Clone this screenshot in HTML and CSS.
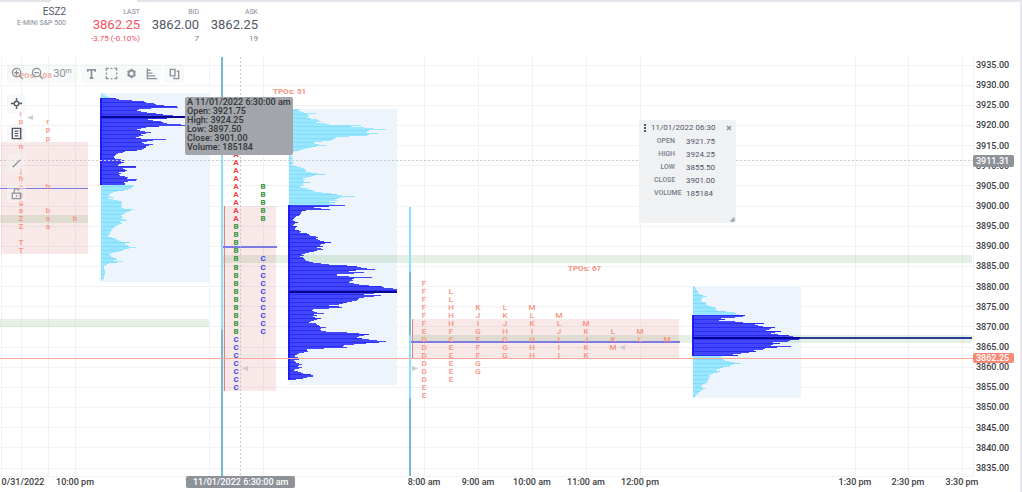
FILE: index.html
```html
<!DOCTYPE html>
<html lang="en">

<head>
  <meta charset="utf-8">
  <title>ESZ2 - Market Profile</title>
  <link rel="stylesheet" href="styles.css">
</head>

<body>
  <div class="tabs"><span class="tab-active"></span></div>
  <header class="quote">
    <div class="quote-col symbol">
      <h1>ESZ2</h1>
      <div class="label">E-MINI S&amp;P 500</div>
    </div>
    <div class="quote-col last">
      <div class="label">LAST</div>
      <div class="price">3862.25</div>
      <div class="sub">-3.75 (-0.10%)</div>
    </div>
    <div class="quote-col">
      <div class="label">BID</div>
      <div class="price">3862.00</div>
      <div class="sub">7</div>
    </div>
    <div class="quote-col">
      <div class="label">ASK</div>
      <div class="price">3862.25</div>
      <div class="sub">19</div>
    </div>
  </header>

  <main class="chart">
    <svg id="plot" class="plot" role="img" aria-label="TPO and volume profile chart"></svg>
    <div id="priceAxis" class="price-axis"></div>

    <div class="toolbar">
      <div class="group">
        <button type="button" aria-label="Zoom in">
          <svg viewBox="0 0 14 14"><circle cx="6" cy="6" r="4.500"/><path d="M9.500 9.500L13 13M3.500 6h5M6 3.500v5"/></svg>
        </button>
        <button type="button" aria-label="Zoom out">
          <svg viewBox="0 0 14 14"><circle cx="6" cy="6" r="4.500"/><path d="M9.500 9.500L13 13M3.500 6h5"/></svg>
        </button>
        <button type="button" class="interval">30<sup>m</sup></button>
      </div>
      <div class="group">
        <button type="button" aria-label="Text">
          <svg viewBox="0 0 14 14"><path d="M3 5V3h8v2M7 3v9M5 12h4" stroke-width="1.800"/></svg>
        </button>
        <button type="button" aria-label="Select area">
          <svg viewBox="0 0 14 14"><path d="M1.500 4V1.500H4M6 1.500h2M10 1.500h2.500V4M12.500 6v2M12.500 10v2.500H10M8 12.500H6M4 12.500H1.500V10M1.500 8V6" stroke-width="1.500"/></svg>
        </button>
        <button type="button" aria-label="Settings">
          <svg viewBox="0 0 14 14"><circle cx="7" cy="7" r="3.200" stroke-width="2"/><path d="M7 2v1.500M7 10.500V12M2.700 4.500L4 5.300M10 8.700l1.300.8M2.700 9.500L4 8.700M10 5.300l1.300-.8" stroke-width="2"/></svg>
        </button>
        <button type="button" aria-label="Profile">
          <svg viewBox="0 0 14 14"><path d="M2.500 1.500v11H13M3 3.500h3M3 6.500h5M3 9.500h8" stroke-width="1.400"/></svg>
        </button>
      </div>
      <div class="group">
        <button type="button" aria-label="Copy">
          <svg viewBox="0 0 14 14"><path d="M2.500 2.500h5v7h-5zM9.500 4.500h2v8h-5v-1.500" stroke-width="1.500"/></svg>
        </button>
      </div>
    </div>

    <div class="sidebar">
      <button type="button" class="dark" aria-label="Crosshair">
        <svg viewBox="0 0 14 14"><circle cx="7" cy="7" r="2.500" stroke-width="1.500"/><path d="M7 1v3M7 10v3M1 7h3M10 7h3" stroke-width="1.500"/></svg>
      </button>
      <button type="button" class="dark" aria-label="Data window">
        <svg viewBox="0 0 14 14"><path d="M2.500 1.500h9v11h-9z" stroke-width="1.500"/><path d="M5 4.500h4M5 7h4M5 9.500h4"/></svg>
      </button>
      <button type="button" aria-label="Draw line">
        <svg viewBox="0 0 14 14"><path d="M3 11l8-8"/></svg>
      </button>
      <button type="button" aria-label="Unlock">
        <svg viewBox="0 0 14 14"><path d="M2.500 6.500h9v6h-9zM4.500 6.500V4a2.300 2.300 0 0 1 4.600 0M7 9v1.500"/></svg>
      </button>
    </div>

    <div class="tooltip">
      <div>A 11/01/2022 6:30:00 am</div>
      <div>Open: 3921.75</div>
      <div>High: 3924.25</div>
      <div>Low: 3897.50</div>
      <div>Close: 3901.00</div>
      <div>Volume: 185184</div>
    </div>

    <section class="data-box">
      <div class="data-head">
        <svg class="grip" viewBox="0 0 4 9"><path d="M1 0h2v2H1zM1 3h2v2H1zM1 6h2v2H1z"/></svg>
        <span>11/01/2022 06:30</span>
        <button type="button" aria-label="Close">
          <svg viewBox="0 0 6 6"><path d="M1 1l4 4M5 1L1 5"/></svg>
        </button>
      </div>
      <table>
        <tr><th scope="row">OPEN</th><td>3921.75</td></tr>
        <tr><th scope="row">HIGH</th><td>3924.25</td></tr>
        <tr><th scope="row">LOW</th><td>3855.50</td></tr>
        <tr><th scope="row">CLOSE</th><td>3901.00</td></tr>
        <tr><th scope="row">VOLUME</th><td>185184</td></tr>
      </table>
      <svg class="resize" viewBox="0 0 6 6"><path d="M5 1v4H1M3 3h2v2H3z"/></svg>
    </section>

    <div class="badge cursor-price">3911.31</div>
    <div class="badge last-price">3862.25</div>
    <div class="badge cursor-time">11/01/2022 6:30:00 am</div>
  </main>
  <script src="chart.js"></script>
</body>

</html>
```

FILE: styles.css
```css
* {
  box-sizing: border-box;
}

body {
  font-family: Roboto, sans-serif;
  margin: 0;
  min-height: 100vh;
  background-color: #fff;
  color: #4f5666;
  border-right: 2px solid #e6e7ec;
  overflow: hidden;
}

button {
  display: flex;
  align-items: center;
  justify-content: center;
  padding: 0;
  border: 0;
  background: none;
  font-family: inherit;
  color: #8b919b;
}

button svg {
  width: 13px;
  height: 13px;
  fill: none;
  stroke: currentColor;
  stroke-width: 1.3;
}

/* header */
.tabs {
  height: 2px;
  padding-left: 51px;
  background-color: #e1e4e8;
}

.tab-active {
  display: block;
  width: 86px;
  height: 2px;
  background-color: #fff;
}

.quote {
  display: flex;
  height: 55px;
  padding-top: 4px;
}

.quote-col {
  width: 59px;
  text-align: right;
}

.quote-col.symbol {
  width: 66px;
}

.quote-col.last {
  width: 74px;
}

h1 {
  margin: 0;
  font-size: 10px;
  line-height: 11px;
  font-weight: 400;
}

.label {
  font-size: 7px;
  line-height: 12px;
  color: #858a95;
}

.quote-col .price {
  font-size: 13px;
  line-height: 14px;
}

.sub {
  font-size: 8px;
  line-height: 13px;
  color: #767c88;
}

.last .price,
.last .sub {
  color: #f4505e;
}

/* chart */
.chart {
  position: relative;
  display: flex;
}

.plot {
  flex: 1;
  min-width: 0;
  height: 435px;
  overflow: visible;
}

.price-axis {
  display: flex;
  flex-direction: column;
  justify-content: space-between;
  width: 47px;
  height: 419px;
  padding: 2px 0 2px 3px;
  font-size: 9px;
  line-height: 12px;
  font-weight: 500;
  color: #3c3e43;
}

.grid {
  stroke: #f2f2f3;
}

.cross {
  stroke: #c8c9cc;
  stroke-dasharray: 2 2;
}

.last-line {
  stroke: #fbaa9b;
}

.time {
  font-size: 9px;
  font-weight: 500;
  fill: #3c3e43;
  text-anchor: middle;
}

.tpo {
  font-size: 8px;
  font-weight: 500;
  text-anchor: middle;
}

.tpo.red,
.tpo.green,
.tpo.blue {
  font-weight: 700;
}

.count {
  font-size: 8px;
  font-weight: 700;
}

.salmon { fill: #f5917f; }
.red { fill: #f93f46; }
.green { fill: #34933a; }
.blue { fill: #4646f6; }

.profile-bg { fill: #edf4fb; }
.value-box { fill: rgba(214, 120, 120, 0.17); }
.band { fill: rgba(120, 185, 120, 0.2); }
.mid { fill: #7b7be3; }
.open-bar { fill: #d88585; }
.session { fill: #77b7cf; }
.session-hot { fill: #8de0fc; }
.outer { fill: #98e6ff; }
.outer-line { fill: #84dcf7; }
.inner { fill: #4347fc; }
.inner-line { fill: #2b2df2; }
.edge { fill: #1c1cf5; }
.poc { fill: #070794; }
.poc-ray { fill: #293c96; }
.mark { fill: #cbcccd; }

/* tools */
.toolbar {
  position: absolute;
  top: 7px;
  left: 7px;
  display: flex;
  gap: 3px;
}

.group {
  display: flex;
  border-radius: 3px;
  background-color: rgba(233, 238, 239, 0.3);
}

.group button {
  width: 20px;
  height: 19px;
}

.group .interval {
  width: 31px;
  align-items: flex-start;
  font-size: 11px;
  line-height: 19px;
}

.interval sup {
  font-size: 7px;
  line-height: 14px;
}

.sidebar {
  position: absolute;
  top: 37px;
  left: 7px;
  display: flex;
  flex-direction: column;
  gap: 11px;
}

.sidebar button {
  width: 19px;
  height: 19px;
  border-radius: 3px;
  background-color: rgba(245, 247, 247, 0.4);
}

.sidebar .dark {
  background-color: rgba(245, 247, 247, 0.7);
  color: #4d5564;
}

/* overlays */
.tooltip {
  position: absolute;
  top: 40px;
  left: 185px;
  padding: 1px 2px 3px;
  border-radius: 2px;
  background-color: #a2a5aa;
  color: #333538;
  font-size: 9px;
  line-height: 9px;
  font-weight: 500;
  white-space: nowrap;
}

.data-box {
  position: absolute;
  top: 63px;
  left: 639px;
  width: 97px;
  height: 103px;
  padding: 2px 4px;
  border-radius: 2px;
  background-color: #eff1f3;
}

.data-head {
  display: flex;
  align-items: center;
  gap: 4px;
  font-size: 8px;
  line-height: 12px;
  white-space: nowrap;
}

.grip {
  width: 4px;
  height: 9px;
  fill: #4f5666;
}

.data-head button {
  margin-left: auto;
}

.data-head button svg {
  width: 6px;
  height: 6px;
}

.data-box table {
  width: 78px;
  margin: 1px 0 0 11px;
  table-layout: fixed;
  border-collapse: collapse;
}

.data-box th,
.data-box td {
  height: 13px;
  padding: 0;
  font-size: 8px;
  line-height: 13px;
}

.data-box th {
  width: 21px;
  font-size: 7px;
  font-weight: 500;
  text-align: right;
  white-space: nowrap;
  color: #767c88;
}

.data-box td {
  padding-left: 11px;
}

.data-box .resize {
  position: absolute;
  right: 1px;
  bottom: 1px;
  width: 6px;
  height: 6px;
  fill: none;
  stroke: #9a9ea5;
}

.badge {
  position: absolute;
  padding: 0 3px;
  border-radius: 2px;
  background-color: #8e9299;
  color: #fff;
  font-size: 9px;
  line-height: 12px;
  font-weight: 500;
  white-space: nowrap;
}

.cursor-price,
.last-price {
  right: 6px;
  width: 41px;
}

.cursor-price {
  top: 98px;
}

.last-price {
  top: 296px;
  line-height: 10px;
  background-color: #f98b76;
}

.cursor-time {
  top: 419px;
  left: 186px;
  padding: 0 7px;
}
```

FILE: chart.js
```js
const plot = document.getElementById('plot');
const priceAxis = document.getElementById('priceAxis');

const TOP_PRICE = 3935;
const BOTTOM_PRICE = 3835;
const PLOT_HEIGHT = 419;

function priceY(price) {
  return 8 + (TOP_PRICE - price) * 403 / (TOP_PRICE - BOTTOM_PRICE);
}

function add(tag, attrs, text) {
  const el = document.createElementNS('http://www.w3.org/2000/svg', tag);
  for (const name in attrs) {
    el.setAttribute(name, attrs[name]);
  }
  if (text) el.textContent = text;
  plot.appendChild(el);
}

function rect(cls, x, y, width, height) {
  add('rect', { class: cls, x, y, width, height, 'shape-rendering': 'crispEdges' });
}

function line(cls, x1, y1, x2, y2) {
  add('line', { class: cls, x1, y1, x2, y2, 'shape-rendering': 'crispEdges' });
}

// grid and price labels
for (let p = TOP_PRICE; p >= BOTTOM_PRICE; p -= 5) {
  line('grid', 0, priceY(p), '100%', priceY(p));
  const label = document.createElement('div');
  label.textContent = p.toFixed(2);
  priceAxis.appendChild(label);
}
[1, 21, 48, 75, 209, 263, 424, 478, 532, 586, 640, 855, 908, 962].forEach(x => line('grid', x, 0, x, PLOT_HEIGHT));
line('grid', '100%', 0, '100%', PLOT_HEIGHT);
line('grid', 0, PLOT_HEIGHT, '100%', PLOT_HEIGHT);

const times = [
  [23, '0/31/2022'], [75, '10:00 pm'], [209, '11/01/2022'], [424, '8:00 am'], [478, '9:00 am'],
  [532, '10:00 am'], [586, '11:00 am'], [640, '12:00 pm'], [855, '1:30 pm'], [908, '2:30 pm'], [962, '3:30 pm']
];
times.forEach(t => add('text', { class: 'time', x: t[0], y: 428 }, t[1]));

// volume profiles: one bar width per tick, "from"/"to" are the value area rows
const profiles = [
  {
    x: 101, y: 36, from: 5, to: 92, poc: 23, bottom: 225,
    bars: [
      1, 2, 4, 6, 9, 15, 18, 31, 43, 45, 53, 55, 63, 76, 77, 50, 38, 36, 40, 46, 55, 62, 72, 108, 108, 66, 47, 52, 60,
      62, 66, 80, 84, 58, 45, 40, 36, 39, 44, 50, 45, 40, 42, 38, 35, 40, 65, 52, 46, 41, 43, 52, 48, 45, 45, 43,
      41, 36, 24, 22, 17, 15, 14, 13, 13, 14, 20, 24, 20, 23, 20, 18, 17, 35, 35, 22, 24, 26, 24, 18, 20, 18, 19, 24,
      27, 26, 36, 35, 27, 23, 24, 24,
      33, 32, 31, 30, 27, 23, 16, 12, 10, 8, 8, 9, 13, 7, 12, 17, 20, 21, 21, 20, 21, 20, 21, 23, 33, 30, 28, 25,
      24, 22, 20, 21, 22, 20, 24, 26, 19, 20, 21, 18, 16, 14, 13, 12, 11, 10, 10, 9, 9, 8, 8, 7, 11, 14, 16, 18, 20,
      29, 24, 24, 27, 28, 35, 28, 24, 21, 18, 14, 10, 8, 10, 10, 12, 15, 16, 13, 22, 16, 8, 6, 4, 3, 3, 3, 3, 4, 4,
      4, 4, 4, 3, 3, 3, 3, 2, 1
    ]
  },
  {
    x: 289, y: 52, from: 96, to: 276, poc: 182, bottom: 328,
    bars: [
      11, 9, 12, 15, 27, 18, 20, 20, 18, 22, 28, 30, 32, 27, 36, 40, 72, 62, 75, 84, 97, 80, 78, 78, 89, 80, 78, 60,
      47, 46, 44, 42, 33, 25, 26, 30, 37, 27, 22, 18, 14, 10, 5, 3, 2, 2, 2, 3, 3, 4, 3, 3, 2, 4, 5, 3, 4, 8, 12, 15,
      16, 17, 17, 22, 28, 36, 25, 22, 18, 14, 16, 14, 15, 21, 14, 14, 15, 11, 13, 18, 20, 24, 26, 33, 42, 48, 53,
      66, 52, 49, 46, 48, 40, 46, 41, 45,
      56, 40, 25, 32, 41, 17, 13, 12, 12, 11, 10, 7, 6, 5, 4, 4, 6, 9, 6, 5, 4, 8, 7, 6, 6, 10, 12, 11, 18, 20, 21,
      27, 29, 27, 29, 31, 35, 42, 36, 32, 31, 34, 28, 32, 34, 28, 25, 20, 16, 13, 15, 11, 14, 15, 16, 17, 20, 24,
      32, 40, 58, 68, 72, 78, 86, 67, 60, 75, 65, 48, 48, 60, 83, 65, 63, 64, 61, 60, 65, 70, 80, 93, 95,
      104, 108, 108, 90, 106, 85, 75, 92, 85, 75, 70, 69, 68, 63, 58, 54, 50, 40, 50, 53, 40, 24, 23, 25, 28, 35,
      25, 28, 24, 26, 32, 28, 25, 22, 20, 27, 28, 30, 31, 37, 32, 31, 32, 37, 58, 70, 80, 75, 70, 68, 73, 80,
      88, 97, 90, 77, 65, 55, 54, 58, 35, 18, 18, 19, 15, 10, 8, 6, 6, 9, 12, 10, 5, 6, 7, 10, 13, 10, 9, 13, 10,
      6, 5, 9, 12, 14, 22, 24, 24, 18, 14, 7
    ]
  },
  {
    x: 693, y: 229, from: 29, to: 70, poc: 51, bottom: 341,
    bars: [
      1, 2, 3, 3, 4, 5, 4, 6, 7, 10, 14, 10, 9, 8, 8, 9, 13, 13, 13, 15, 18, 22, 23, 23, 24, 33, 41, 43, 46,
      52, 50, 42, 28, 32, 26, 42, 50, 71, 62, 65, 70, 82, 78, 76, 73, 88, 82, 78, 85, 96, 100, 107, 107, 106, 97,
      95, 80, 87, 80, 78, 98, 84, 72, 70, 61, 63, 56, 48, 40, 45,
      28, 29, 28, 30, 32, 37, 42, 47, 40, 38, 37, 30, 27, 24, 23, 27, 24, 20, 18, 16, 17, 16, 16, 15, 15, 14, 15,
      12, 10, 9, 8, 9, 13, 10, 8, 7, 6, 5, 4, 3, 2, 1
    ]
  }
];

profiles.forEach(p => rect('profile-bg', p.x, p.y, 108, p.bottom - p.y));

// green bands left by earlier profiles
rect('band', 0, 158, 88, 8);
rect('band', 0, 262, 209, 8);
rect('band', 221, 198, '77.2%', 8);
rect('band', 410, 278, '57.8%', 8);

profiles.forEach(p => {
  p.bars.forEach((w, i) => {
    const inside = i >= p.from && i < p.to;
    let cls = inside ? 'inner' : 'outer';
    if (i % 4 === 1) cls += '-line';
    rect(cls, p.x, p.y + i, w, 1);
  });
  rect('edge', p.x - 1, p.y + p.from, 2, Math.min(p.to, p.bars.length) - p.from);
  rect('poc', p.x, p.y + p.poc, 108, 2);
});
rect('poc-ray', 800, 280, '17.7%', 2);

// value areas
rect('value-box', 1, 85, 87, 112);
rect('value-box', 223, 149, 53, 185);
rect('value-box', 412, 262, 267, 40);
rect('open-bar', 224, 149, 1, 185);
rect('open-bar', 412, 262, 1, 40);
rect('mid', 0, 131, 88, 1);
rect('mid', 222, 189, 55, 2);
rect('mid', 410, 284, 270, 2);

// session starts
rect('session', 221, 0, 2, PLOT_HEIGHT);
rect('session-hot', 221, 52, 2, 221);
rect('session', 409, 150, 2, 269);
rect('session-hot', 409, 150, 2, 65);
rect('session-hot', 409, 278, 2, 63);

// crosshair and last price
line('cross', 0, 103, '100%', 103);
line('cross', 240, 0, 240, PLOT_HEIGHT);
line('last-line', 0, 301, '100%', 301);

// TPO letters, a row for every two points
function letters(x, topPrice, rows, colorOf) {
  rows.forEach((row, r) => {
    [...row].forEach((ch, c) => {
      if (ch === ' ') return;
      add('text', { class: 'tpo ' + colorOf(ch), x: x + c * 27, y: Math.round(priceY(topPrice - r * 2)) + 3 }, ch);
    });
  });
}

const salmon = () => 'salmon';
const bright = ch => ({ A: 'red', B: 'green', C: 'blue' }[ch]);

letters(21, 3923, ['r', 'pr', 'pp', 'np', 'n', '', '', 'j', 'h', 'gh', 'g', 'g', 'ab', 'Zab', 'Za', '', 'T', 'T'], salmon);
letters(236, 3913, [
  'A', 'A', 'A', 'A', 'AB', 'AB', 'AB', 'AB', 'AB', 'B', 'B', 'B', 'B',
  'BC', 'BC', 'BC', 'BC', 'BC', 'BC', 'BC', 'BC', 'BC', 'BC',
  'C', 'C', 'C', 'C', 'C', 'C', 'C'
], bright);
letters(424, 3881, [
  'F', 'FL', 'FL', 'FHKLM', 'FHJKLM', 'FHIJKLM', 'EFGHIJKLM', 'DEFGHIJKLM',
  'DEFGHIKM', 'DEFGHIK', 'DEG', 'DEG', 'DE', 'E', 'E'
], salmon);

add('text', { class: 'count salmon', x: 14, y: 21 }, 'TPOs: 108');
add('text', { class: 'count salmon', x: 273, y: 37 }, 'TPOs: 51');
add('text', { class: 'count salmon', x: 568, y: 214 }, 'TPOs: 67');

// open and close marks
add('path', { class: 'mark', d: 'M33 58v5l-6-2.500z' });
add('path', { class: 'mark', d: 'M248 309v5l-6-2.500z' });
add('path', { class: 'mark', d: 'M625 288v5l-6-2.500z' });
add('path', { class: 'mark', d: 'M412 309v5l6-2.500z' });
```
